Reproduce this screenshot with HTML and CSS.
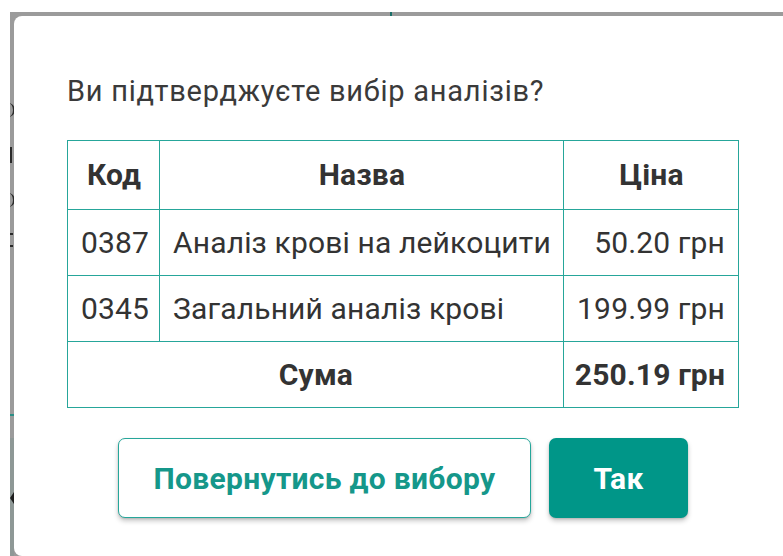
FILE: index.html
```html
<!DOCTYPE html>
<html lang="uk">
<head>
<meta charset="utf-8">
<title>Підтвердження вибору</title>
<link rel="stylesheet" href="styles.css">
</head>
<body>
<div class="backdrop">
  <div class="behind" aria-hidden="true">
    <span class="mark arc a1"></span>
    <span class="mark bar b1"></span>
    <span class="mark arc a2"></span>
    <span class="mark dash d1"></span>
    <span class="mark dash d2"></span>
    <span class="mark line"></span>
    <span class="mark tick"></span>
    <span class="mark lower"></span>
    <span class="mark arrow"></span>
  </div>
  <div class="dialog" role="dialog">
    <p class="question">Ви підтверджуєте вибір аналізів?</p>
    <table class="orders">
      <thead>
        <tr>
          <th>Код</th>
          <th>Назва</th>
          <th>Ціна</th>
        </tr>
      </thead>
      <tbody>
        <tr>
          <td class="code">0387</td>
          <td>Аналіз крові на лейкоцити</td>
          <td class="price">50.20 грн</td>
        </tr>
        <tr>
          <td class="code">0345</td>
          <td>Загальний аналіз крові</td>
          <td class="price">199.99 грн</td>
        </tr>
      </tbody>
      <tfoot>
        <tr>
          <td colspan="2" class="sum-label">Сума</td>
          <td class="price sum-value">250.19 грн</td>
        </tr>
      </tfoot>
    </table>
    <div class="actions">
      <button class="btn btn-outline" type="button">Повернутись до вибору</button>
      <button class="btn btn-primary" type="button">Так</button>
    </div>
  </div>
</div>
</body>
</html>
```

FILE: styles.css
```css
html, body {
  margin: 0;
  padding: 0;
  background: #ffffff;
  width: 783px;
  height: 556px;
  overflow: hidden;
}

body {
  font-family: Roboto, "Noto Sans", sans-serif;
  color: #333333;
}

/* dimmed page behind the modal */
.backdrop {
  position: relative;
  margin: 12px 0 0 10px;
  height: 544px;
  background: #9b9b9b;
  padding: 4px 0 0 4px;
  box-sizing: border-box;
  overflow: hidden;
}

.behind {
  position: absolute;
  inset: 0;
}

/* fragments of the page content peeking out at the left edge */
.mark {
  position: absolute;
  left: 0;
  display: block;
}
.arc {
  width: 8px;
  height: 14px;
  left: -5px;
  border-right: 2px solid #2a2a2a;
  border-radius: 0 8px 8px 0;
}
.a1 { top: 91px; }
.a2 { top: 181px; }
.bar {
  top: 135px;
  width: 2px;
  height: 16px;
  background: #2a2a2a;
}
.dash {
  width: 3px;
  height: 2px;
  background: #2a2a2a;
}
.d1 { top: 221px; }
.d2 { top: 233px; }

.line {
  top: 402px;
  width: 4px;
  height: 2px;
  background: #2b8f86;
}

.tick {
  left: 380px;
  top: 0;
  width: 2px;
  height: 4px;
  background: #1b6f68;
}

.lower {
  top: 426px;
  width: 4px;
  bottom: 0;
  background: #8e9896;
}

.arrow {
  top: 480px;
  left: 0;
  width: 0;
  height: 0;
  border-top: 6px solid transparent;
  border-bottom: 6px solid transparent;
  border-right: 4px solid #1e1e1e;
}

.dialog {
  position: relative;
  background: #ffffff;
  border-radius: 8px;
  width: 790px;
  height: 540px;
  box-sizing: border-box;
  padding: 58px 0 0 53px;
}

.question {
  margin: 0;
  font-size: 29px;
  letter-spacing: 0.75px;
  line-height: 34px;
  color: #3a3a3a;
}

.orders {
  margin-top: 32px;
  border-collapse: collapse;
  font-size: 30px;
  letter-spacing: 0.15px;
  line-height: 36px;
  color: #333333;
}

.orders th,
.orders td {
  border: 1px solid #26a69a;
  padding: 15px 12px 14px 13px;
  text-align: left;
  white-space: nowrap;
}

.orders th {
  font-weight: 700;
  text-align: center;
  padding-top: 16px;
  padding-bottom: 16px;
}

.orders td.code {
  padding-right: 10px;
}

.orders td.price {
  text-align: right;
  padding-left: 11px;
  padding-right: 13px;
}

.orders .sum-label {
  text-align: center;
  font-weight: 700;
}

.orders .sum-value {
  font-weight: 700;
}

.actions {
  display: flex;
  gap: 18px;
  margin-top: 30px;
  width: 672px;
  justify-content: center;
}

.btn {
  font-family: Roboto, "Noto Sans", sans-serif;
  font-size: 30px;
  letter-spacing: 0.3px;
  font-weight: 700;
  height: 80px;
  border-radius: 7px;
  box-sizing: border-box;
  cursor: pointer;
  box-shadow: 0 3px 5px rgba(0, 0, 0, 0.22), 0 1px 2px rgba(0, 0, 0, 0.12);
}

.btn-outline {
  width: 413px;
  background: #ffffff;
  color: #15978a;
  border: 1.5px solid #26a69a;
}

.btn-primary {
  width: 139px;
  background: #009688;
  color: #ffffff;
  border: none;
}
```
